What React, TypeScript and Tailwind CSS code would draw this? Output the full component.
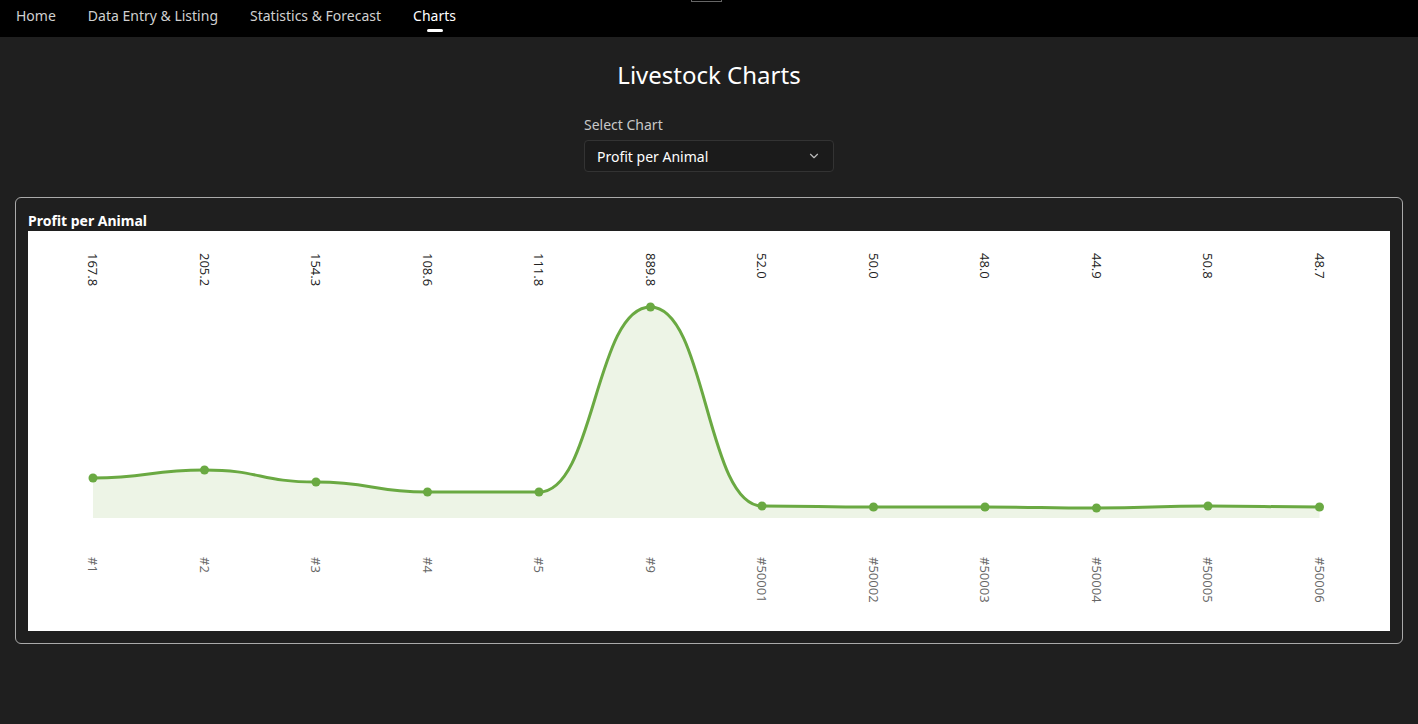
import { ChevronDown } from 'lucide-react';

const data = [
	{ label: '#1', value: 167.8, y: 478 },
	{ label: '#2', value: 205.2, y: 470 },
	{ label: '#3', value: 154.3, y: 482 },
	{ label: '#4', value: 108.6, y: 492 },
	{ label: '#5', value: 111.8, y: 492 },
	{ label: '#9', value: 889.8, y: 307 },
	{ label: '#50001', value: 52.0, y: 506 },
	{ label: '#50002', value: 50.0, y: 507 },
	{ label: '#50003', value: 48.0, y: 507 },
	{ label: '#50004', value: 44.9, y: 508 },
	{ label: '#50005', value: 50.8, y: 506 },
	{ label: '#50006', value: 48.7, y: 507 }
];

const X0 = 28;
const Y0 = 231;

function Chart() {
	const pts = data.map((d, i) => ({ x: 93 + i * 111.5 - X0, y: d.y - Y0 }));
	let line = `M${pts[0].x},${pts[0].y}`;
	for (let i = 1; i < pts.length; i++) {
		const a = pts[i - 1];
		const b = pts[i];
		const mx = (a.x + b.x) / 2;
		line += ` C${mx},${a.y} ${mx},${b.y} ${b.x},${b.y}`;
	}
	const base = 518 - Y0;
	const area = `${line} L${pts[pts.length - 1].x},${base} L${pts[0].x},${base} Z`;

	return (
		<svg width="1358" height="400" className="block">
			<path d={area} fill="#edf4e6" />
			<path d={line} fill="none" stroke="#6aa942" strokeWidth="3" />
			{pts.map((p, i) => (
				<g key={i}>
					<circle cx={p.x} cy={p.y} r="4.5" fill="#6aa942" />
					<text
						transform={`translate(${p.x - 5},${253 - Y0}) rotate(90)`}
						fontSize="13"
						fill="#222"
						fontFamily="'Open Sans', sans-serif"
					>
						{data[i].value.toFixed(1)}
					</text>
					<text
						transform={`translate(${p.x - 5},${557 - Y0}) rotate(90)`}
						fontSize="13"
						fill="#666"
						fontFamily="'Open Sans', sans-serif"
					>
						{data[i].label}
					</text>
				</g>
			))}
		</svg>
	);
}

export default function App() {
	return (
		<div className="min-h-[724px] bg-[#1f1f1f] text-white font-['Open_Sans',sans-serif]">
			<nav className="relative flex h-[37px] items-start gap-8 bg-black px-4 pt-[5px] text-[14px] text-[#d0d0d0]">
				<span>Home</span>
				<span>Data Entry &amp; Listing</span>
				<span>Statistics &amp; Forecast</span>
				<span className="relative text-white">
					Charts
					<span className="absolute left-1/2 top-[24px] h-[3px] w-4 -translate-x-1/2 rounded bg-white" />
				</span>
				<span className="absolute left-[691px] top-0 h-[2px] w-[31px] border border-t-0 border-[#666]" />
			</nav>
			<h1 className="mt-[22px] text-center text-[24px] leading-[32px]">Livestock Charts</h1>
			<div className="mx-auto mt-[23px] w-[250px]">
				<div className="text-[14px] text-[#c8c8c8]">Select Chart</div>
				<div className="mt-[5px] flex h-[32px] items-center justify-between rounded border border-[#333] bg-[#1b1b1b] px-3 text-[14px]">
					<span>Profit per Animal</span>
					<ChevronDown className="h-3.5 w-3.5 text-[#bbb]" />
				</div>
			</div>
			<div className="mx-[15px] mt-[25px] rounded-md border border-[#aaa] px-3 pt-[13px] pb-3">
				<div className="text-[14px] font-bold leading-[20px]">Profit per Animal</div>
				<div className="bg-white">
					<Chart />
				</div>
			</div>
		</div>
	);
}
